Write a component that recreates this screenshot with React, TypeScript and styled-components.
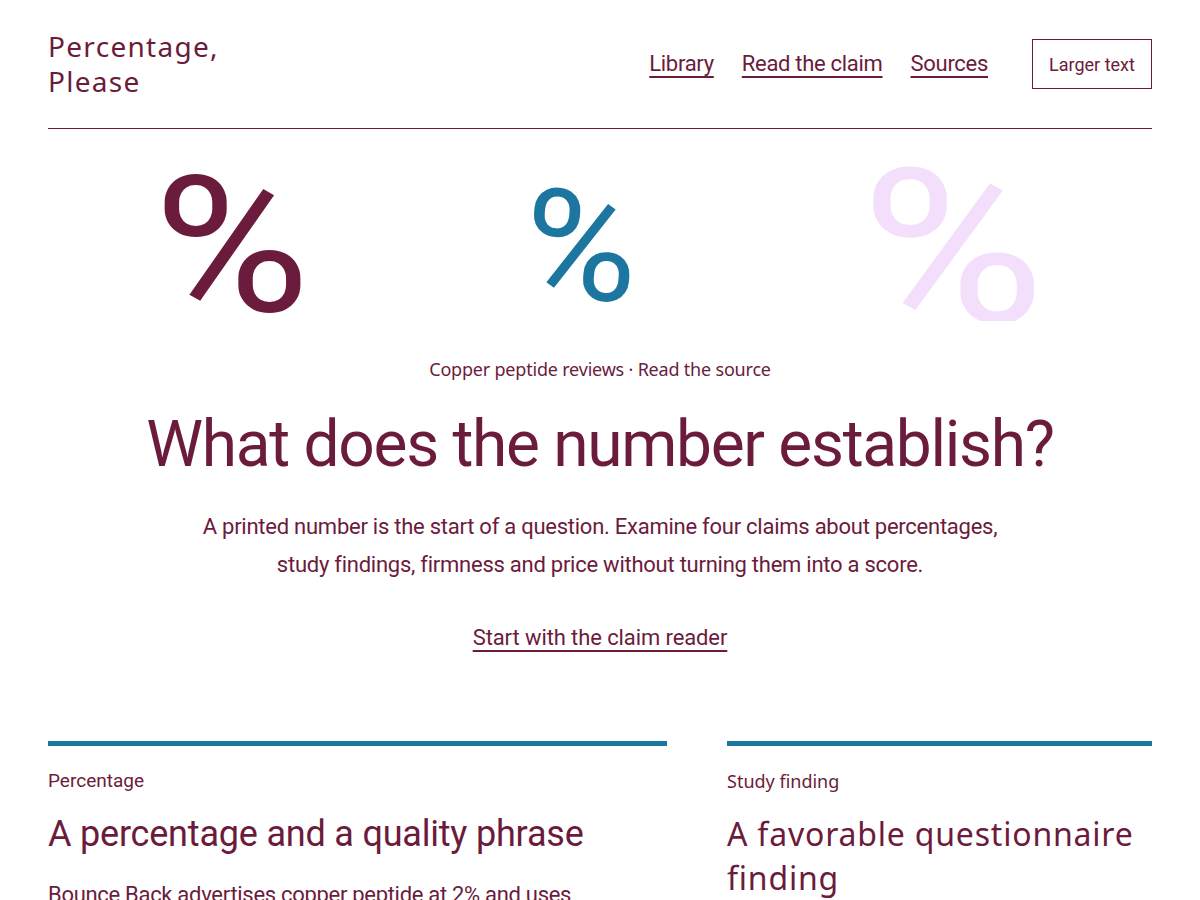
import styled, { createGlobalStyle } from 'styled-components';

const maroon = '#6b1b3c';
const blue = '#1c76a0';
const pink = '#f3dffb';

const narrow = `"Roboto", "Liberation Sans", sans-serif`;
const wide = `"Noto Sans", "Open Sans", sans-serif`;

const GlobalStyle = createGlobalStyle`
  html, body {
    margin: 0;
    padding: 0;
    background: #ffffff;
    color: ${maroon};
    font-family: ${narrow};
  }
  * { box-sizing: border-box; }
`;

const Page = styled.div`
  padding: 0 48px;
`;

const Header = styled.header`
  display: flex;
  align-items: center;
  justify-content: space-between;
  padding: 29px 0 29px;
  border-bottom: 1px solid ${maroon};
`;

const Brand = styled.a`
  font-family: ${wide};
  font-size: 28px;
  line-height: 35px;
  letter-spacing: 1.3px;
  color: ${maroon};
  text-decoration: none;
  width: 200px;
`;

const Nav = styled.nav`
  display: flex;
  align-items: center;
  gap: 28px;
`;

const NavLink = styled.a`
  font-size: 22px;
  letter-spacing: -0.3px;
  line-height: 30px;
  color: ${maroon};
  text-decoration: underline;
  text-decoration-thickness: 2px;
  text-underline-offset: 5px;
`;

const TextButton = styled.button`
  margin-left: 16px;
  width: 120px;
  height: 50px;
  border: 1px solid ${maroon};
  background: #fff;
  color: ${maroon};
  font-family: ${narrow};
  font-size: 18px;
`;

const GlyphRow = styled.div`
  display: grid;
  grid-template-columns: repeat(3, 1fr);
  height: 192px;
  overflow: hidden;
`;

const Glyph = styled.span<{
  $color: string;
  $size: number;
  $x: number;
  $y: number;
  $rot: number;
  $sx: number;
}>`
  display: inline-block;
  font-family: ${narrow};
  color: ${p => p.$color};
  font-size: ${p => p.$size}px;
  line-height: 1;
  transform: translate(${p => p.$x}px, ${p => p.$y}px) rotate(${p => p.$rot}deg)
    scaleX(${p => p.$sx});
  transform-origin: center;
`;

const Hero = styled.section`
  display: flex;
  flex-direction: column;
  align-items: center;
  text-align: center;
`;

const Eyebrow = styled.p`
  margin: 34px 0 0;
  font-family: ${wide};
  font-size: 18px;
  letter-spacing: -0.2px;
  line-height: 28px;
`;

const Title = styled.h1`
  margin: 22px 0 0;
  font-weight: 400;
  font-size: 64px;
  letter-spacing: -1.3px;
  line-height: 80px;
`;

const Lead = styled.p`
  margin: 23px 0 0;
  max-width: 820px;
  font-size: 22px;
  letter-spacing: -0.25px;
  line-height: 38px;
`;

const CtaLink = styled.a`
  margin-top: 38px;
  font-size: 22px;
  letter-spacing: -0.1px;
  line-height: 32px;
  color: ${maroon};
  text-decoration: underline;
  text-decoration-thickness: 2px;
  text-underline-offset: 5px;
`;

const Cards = styled.section`
  display: grid;
  grid-template-columns: 619fr 425fr;
  gap: 60px;
  margin-top: 87px;
`;

const Card = styled.article`
  border-top: 5px solid ${blue};
  padding-top: 23px;
`;

const Kind = styled.div<{ $wide?: boolean }>`
  font-family: ${p => (p.$wide ? wide : narrow)};
  font-size: ${p => (p.$wide ? 18 : 19)}px;
  line-height: 24px;
`;

const CardTitle = styled.h2<{ $wide?: boolean }>`
  margin: 19px 0 0;
  font-weight: 400;
  font-family: ${p => (p.$wide ? wide : narrow)};
  font-size: ${p => (p.$wide ? 32 : 36)}px;
  letter-spacing: ${p => (p.$wide ? '0.8px' : '-0.2px')};
  line-height: 44px;
`;

const CardBody = styled.p`
  margin: 22px 0 0;
  font-size: 22px;
  letter-spacing: -0.3px;
  line-height: 34px;
`;

const glyphs = [
  { color: maroon, size: 190, x: 114, y: 22, rot: 0, sx: 1.12 },
  { color: blue, size: 150, x: 110, y: 43, rot: 5, sx: 1.05 },
  { color: pink, size: 215, x: 90, y: 12, rot: 0, sx: 1.17 },
];

export default function App() {
  return (
    <>
      <GlobalStyle />
      <Page>
        <Header>
          <Brand href="#">Percentage, Please</Brand>
          <Nav>
            <NavLink href="#">Library</NavLink>
            <NavLink href="#">Read the claim</NavLink>
            <NavLink href="#">Sources</NavLink>
            <TextButton type="button">Larger text</TextButton>
          </Nav>
        </Header>

        <GlyphRow aria-hidden="true">
          {glyphs.map((g, i) => (
            <div key={i}>
              <Glyph
                $color={g.color}
                $size={g.size}
                $x={g.x}
                $y={g.y}
                $rot={g.rot}
                $sx={g.sx}
              >
                %
              </Glyph>
            </div>
          ))}
        </GlyphRow>

        <Hero>
          <Eyebrow>Copper peptide reviews · Read the source</Eyebrow>
          <Title>What does the number establish?</Title>
          <Lead>
            A printed number is the start of a question. Examine four claims about percentages,
            study findings, firmness and price without turning them into a score.
          </Lead>
          <CtaLink href="#">Start with the claim reader</CtaLink>
        </Hero>

        <Cards>
          <Card>
            <Kind>Percentage</Kind>
            <CardTitle>A percentage and a quality phrase</CardTitle>
            <CardBody>
              Bounce Back advertises copper peptide at 2% and uses “dermatologist tested” on the
              front of the jar.
            </CardBody>
          </Card>
          <Card>
            <Kind $wide>Study finding</Kind>
            <CardTitle $wide>A favorable questionnaire finding</CardTitle>
            <CardBody>A small survey reported that most users felt firmer skin.</CardBody>
          </Card>
        </Cards>
      </Page>
    </>
  );
}
